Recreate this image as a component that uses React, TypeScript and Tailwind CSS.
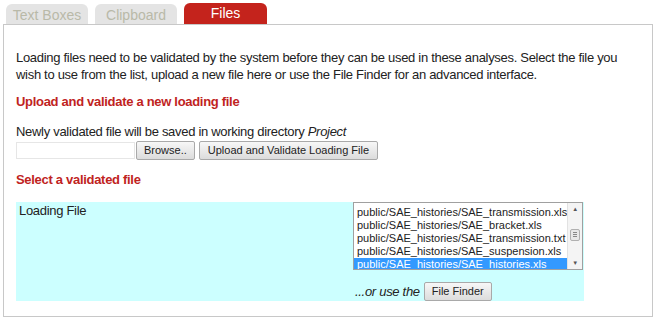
import React from "react";

const files = [
  "public/SAE_histories/SAE_transmission.xls",
  "public/SAE_histories/SAE_bracket.xls",
  "public/SAE_histories/SAE_transmission.txt",
  "public/SAE_histories/SAE_suspension.xls",
  "public/SAE_histories/SAE_histories.xls",
];

function Tab({ label, active }: { label: string; active?: boolean }) {
  return (
    <div
      className={
        active
          ? "w-[83px] h-[21px] rounded-t-[6px] bg-[#c4231c] text-white text-[14px] leading-[21px] text-center"
          : "w-[82px] h-[20px] rounded-t-[6px] bg-[#e4e4e4] text-[#b9b9a8] text-[14px] leading-[22px] text-center"
      }
    >
      {label}
    </div>
  );
}

const btn =
  "h-[19px] border border-[#a9a9a9] rounded-[2px] bg-gradient-to-b from-[#f7f7f7] to-[#dcdcdc] text-[11px] text-[#222] tracking-normal";

export default function App() {
  return (
    <div className="w-[657px] h-[321px] bg-white font-['Liberation_Sans',Arial,sans-serif] text-[13px] tracking-[-0.3px] text-[#222] pt-[3px] pl-[3px]">
      {/* tabs */}
      <div className="flex items-end gap-[7px] pl-[3px] h-[21px] tracking-normal">
        <Tab label="Text Boxes" />
        <Tab label="Clipboard" />
        <Tab label="Files" active />
      </div>

      {/* panel */}
      <div className="w-[650px] h-[293px] border border-[#c8c8c8] pl-[12px] pt-[24px]">
        <p className="leading-[17px] w-[625px]">
          Loading files need to be validated by the system before they can be used in these analyses. Select the file you
          wish to use from the list, upload a new file here or use the File Finder for an advanced interface.
        </p>
        <h3 className="mt-[10px] font-bold text-[#c0231e] leading-[17px]">Upload and validate a new loading file</h3>

        <p className="mt-[14px] leading-[16px]">
          Newly validated file will be saved in working directory <i>Project</i>
        </p>
        <div className="flex items-center h-[20px]">
          <div className="w-[119px] h-[17px] border border-[#e6e6e6] bg-white" />
          <button className={`ml-[1px] px-[7px] ${btn}`}>Browse..</button>
          <button className={`ml-[4px] px-[8px] ${btn}`}>Upload and Validate Loading File</button>
        </div>

        <h3 className="mt-[11px] font-bold text-[#c0231e] leading-[17px]">Select a validated file</h3>

        {/* cyan table */}
        <div className="mt-[14px] w-[568px] h-[99px] bg-[#ccffff] flex">
          <div className="w-[337px] pl-[3px] pt-[1px] leading-[16px]">Loading File</div>
          <div className="flex flex-col">
            <div className="w-[230px] h-[70px] bg-white border border-[#a0a0a0] flex overflow-hidden tracking-normal">
              <div className="flex-1 pt-[3px]">
                {files.map((f, i) => (
                  <div
                    key={f}
                    className={
                      i === files.length - 1
                        ? "h-[13px] pl-[3px] leading-[13px] text-[11px] bg-[#3399ff] text-white whitespace-nowrap"
                        : "h-[13px] pl-[3px] leading-[13px] text-[11px] text-[#222] whitespace-nowrap"
                    }
                  >
                    {f}
                  </div>
                ))}
              </div>
              {/* scrollbar */}
              <div className="w-[15px] border-l border-[#e2e2e2] bg-[#f4f4f4] flex flex-col items-center justify-between">
                <span className="text-[6px] text-[#555] leading-[12px]">▲</span>
                <div className="w-[10px] h-[12px] mb-[2px] border border-[#b0b0b0] rounded-[2px] bg-[#e8e8e8] flex flex-col items-center justify-center gap-[1px]">
                  <div className="w-[4px] h-[1px] bg-[#888]" />
                  <div className="w-[4px] h-[1px] bg-[#888]" />
                  <div className="w-[4px] h-[1px] bg-[#888]" />
                </div>
                <span className="text-[6px] text-[#555] leading-[12px]">▼</span>
              </div>
            </div>
            <div className="flex items-center mt-[12px] pl-[2px]">
              <i className="text-[13px]">...or use the</i>
              <button className={`ml-[4px] px-[7px] ${btn}`}>File Finder</button>
            </div>
          </div>
        </div>
      </div>
    </div>
  );
}
